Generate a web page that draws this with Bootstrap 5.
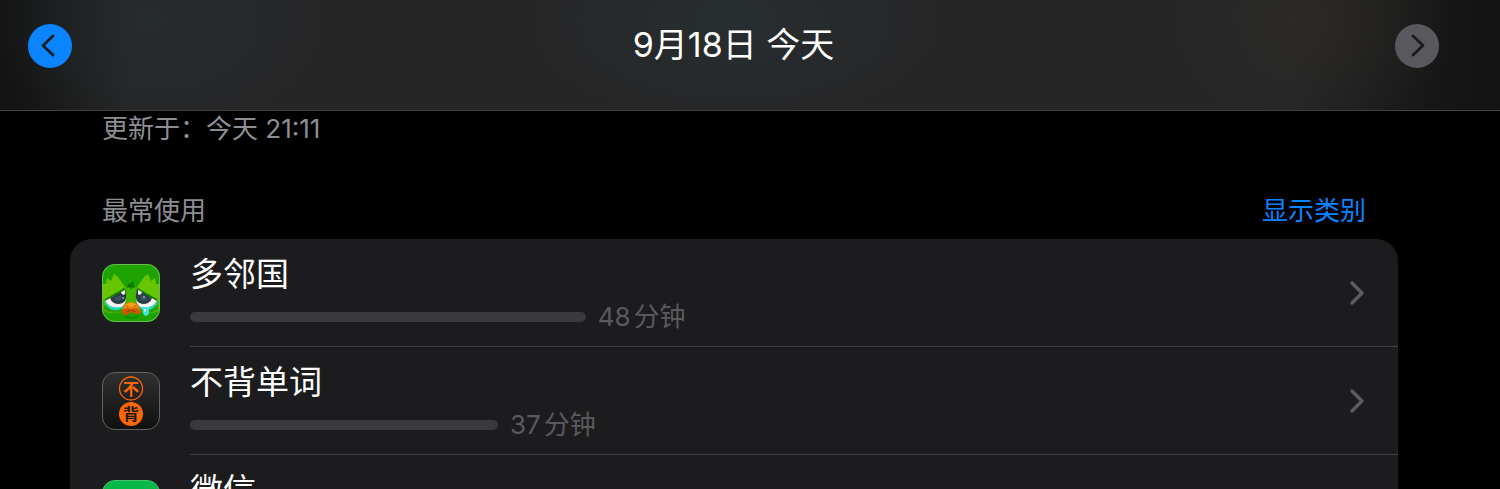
<!DOCTYPE html>
<html lang="zh-CN" data-bs-theme="dark">
<head>
<meta charset="utf-8">
<meta name="viewport" content="width=device-width, initial-scale=1">
<title>屏幕使用时间</title>
<link href="https://cdn.jsdelivr.net/npm/bootstrap@5.3.0/dist/css/bootstrap.min.css" rel="stylesheet">
<style>
body { background: #000; font-family: Inter, "Noto Sans CJK SC", sans-serif; font-size: 26px; line-height: 36px; }
.day-bar {
  padding: 24px 61px 42px 28px; border-bottom: 1px solid #414143;
  background:
    radial-gradient(ellipse 170px 110px at 150px 20px, rgba(38,48,54,.5), transparent),
    radial-gradient(ellipse 200px 100px at 49% 20px, rgba(42,54,57,.5), transparent),
    radial-gradient(ellipse 140px 110px at 88% 20px, rgba(50,47,40,.5), transparent),
    linear-gradient(90deg, #131313 0, #161616 30px, #262627 130px, #262627 calc(100% - 210px), #161616 calc(100% - 60px), #131313 100%);
}
.day-title { font-size: 34px; line-height: 42px; font-weight: 400; }
.day-btn { width: 44px; height: 44px; background: #0a84ff; }
.day-btn:disabled { background: #58585d; opacity: 1; }
.page-body { padding: 0 102px 0 70px; }
.muted-text { color: #8d8d93; }
.section-head { padding: 0 32px; margin-top: 46px; margin-bottom: 10px; }
.section-title { font-size: 26px; line-height: 36px; }
.section-head a { color: #0a84ff; }
.usage-list { background: #1c1c1e; border-radius: 22px 22px 0 0; }
.usage-row { padding-left: 32px; gap: 30px; color: #fff; height: 108px; }
.usage-main { border-bottom: 1px solid #3d3d40; padding-right: 33px; gap: 12px; }
.app-name { font-size: 33px; line-height: 42px; padding-top: 14px; }
.usage-bar { height: 10px; background: #3a3a3c; }
.usage-time { color: #59595e; }
.usage-unit { margin-left: 3px; }
</style>
</head>
<body class="vh-100 overflow-hidden">
<header class="day-bar d-flex align-items-start justify-content-between">
  <button type="button" class="day-btn btn border-0 rounded-circle p-0 d-flex" aria-label="前一天">
    <svg width="44" height="44" viewBox="0 0 44 44" fill="none" stroke="#1a1d20" stroke-width="2.8" stroke-linecap="round" stroke-linejoin="round"><path d="M25 12 15 21.500 25 31"/></svg>
  </button>
  <h1 class="day-title m-0 text-white">9月18日 今天</h1>
  <button type="button" class="day-btn btn border-0 rounded-circle p-0 d-flex" aria-label="后一天" disabled>
    <svg width="44" height="44" viewBox="0 0 44 44" fill="none" stroke="#1a1a1b" stroke-width="2.8" stroke-linecap="round" stroke-linejoin="round"><path d="M18 12 28 21.500 18 31"/></svg>
  </button>
</header>
<main class="page-body">
  <p class="muted-text m-0 px-4 ms-2">更新于：今天 21:11</p>
  <div class="section-head d-flex justify-content-between">
    <h2 class="section-title muted-text m-0 fw-normal" id="most-used">最常使用</h2>
    <a href="#most-used" class="text-decoration-none">显示类别</a>
  </div>
  <div class="usage-list overflow-hidden">
    <a href="#duolingo" id="duolingo" class="usage-row d-flex text-decoration-none">
      <svg class="flex-shrink-0 align-self-center" width="58" height="58" viewBox="0 0 58 58" aria-hidden="true">
        <defs><clipPath id="tile"><rect width="58" height="58" rx="13"/></clipPath></defs>
        <g clip-path="url(#tile)">
          <rect width="58" height="58" fill="#1fa300"/>
          <path d="M0 34Q10 30 22 24Q24 21 29 25Q34 21 36 24Q48 30 58 34V46Q50 52 38 48Q30 44 20 48Q8 52 0 46Z" fill="#43b600"/>
          <path d="M3 41Q12 50 22 44L21 47Q10 51 2 45ZM55 41Q46 50 36 44L37 47Q48 51 56 45Z" fill="#2d9f00"/>
          <path d="M0 20 4 20 5 14 9 17 12 10 16 13 23 23 4 35 0 38ZM58 20 54 20 53 14 49 17 46 10 42 13 35 23 54 35 58 38Z" fill="#69c500"/>
          <path d="M25 24 26 19 28 20 31 17 33 24 30 23 29 26 28 23Z" fill="#087d00"/>
          <path d="M2 37Q6 47 15 46Q21 45 23 41ZM56 37Q52 47 43 46Q37 45 35 41Z" fill="#20dac9"/>
          <path d="M3 36 23 26Q26 40 19 43Q7 45 3 36ZM55 36 35 26Q32 40 39 43Q51 45 55 36Z" fill="#fff0ed"/>
          <path d="M8 34 23 25Q27 39 17 40Q10 40 8 34ZM50 34 35 25Q31 39 41 40Q48 40 50 34Z" fill="#293d48"/>
          <path d="M12 34 19 31Q21 36 16 37Q13 37 12 34ZM46 34 39 31Q37 36 42 37Q45 37 46 34Z" fill="#3a515d"/>
          <path d="M3 36 23 25M55 36 35 25" stroke="#087d00" stroke-width="1.500"/>
          <path d="M19 28 23 26V30Q20 32 19 28ZM36 26 40 28Q39 32 36 30Z" fill="#fff"/>
          <circle cx="21" cy="34" r="1" fill="#92a9ae"/><circle cx="42" cy="33" r="1" fill="#92a9ae"/>
          <path d="M40 43Q44 44 49 42L47 45V49Q46 52 44 52Q41 51 41 48Z" fill="#3ee7df"/><path d="M43 45V48" stroke="#c5fff5" stroke-width="1.500"/>
          <path d="M22 50Q29 56 37 50L35 54Q29 56 24 54Z" fill="#138c00"/>
          <path d="M22 41Q29 35 36 41L39 47Q38 51 34 50L29 48 25 51Q20 52 20 47Z" fill="#cd5a00"/>
          <path d="M22 41Q29 35 36 41L38 46Q32 42 29 46Q26 42 20 46Z" fill="#e9870c"/><path d="M24 41Q29 36 34 41Q29 44 24 41Z" fill="#f9a01c"/>
          <path d="M25 42H26M32 42H33M25 48 29 46 34 48" fill="none" stroke="#a74500" stroke-width="1.200"/>
        </g>
        <rect x=".5" y=".5" width="57" height="57" rx="12.500" fill="none" stroke="#65bd52"/>
      </svg>
      <div class="usage-main d-flex align-items-center flex-grow-1">
        <div class="flex-grow-1 align-self-start">
          <div class="app-name">多邻国</div>
          <div class="d-flex align-items-center gap-2 pt-1"><div class="usage-bar rounded-pill" style="width:34.5%"></div><span class="usage-time ms-1">48<span class="usage-unit">分钟</span></span></div>
        </div>
        <svg class="flex-shrink-0" width="16" height="26" viewBox="0 0 16 26" fill="none" stroke="#5b5b60" stroke-width="3.5" stroke-linecap="round" stroke-linejoin="round"><path d="M3 3 13 13 3 23"/></svg>
      </div>
    </a>
    <a href="#bubei" id="bubei" class="usage-row d-flex text-decoration-none">
      <svg class="flex-shrink-0 align-self-center" width="58" height="58" viewBox="0 0 58 58" aria-hidden="true">
        <defs><linearGradient id="dusk" x1="0" y1="0" x2="0" y2="1"><stop stop-color="#303030"/><stop offset="1" stop-color="#101010"/></linearGradient></defs>
        <rect x=".5" y=".5" width="57" height="57" rx="12.500" fill="url(#dusk)" stroke="#626264"/>
        <circle cx="29" cy="16.500" r="11.500" fill="none" stroke="#f60" stroke-width="1.300"/>
        <circle cx="29" cy="42" r="12" fill="#f60"/>
        <text x="29" y="22.500" text-anchor="middle" font-size="16" font-weight="700" fill="#f60">不</text>
        <text x="29" y="48" text-anchor="middle" font-size="16" font-weight="700" fill="#1b1b1b">背</text>
      </svg>
      <div class="usage-main d-flex align-items-center flex-grow-1">
        <div class="flex-grow-1 align-self-start">
          <div class="app-name">不背单词</div>
          <div class="d-flex align-items-center gap-2 pt-1"><div class="usage-bar rounded-pill" style="width:26.85%"></div><span class="usage-time ms-1">37<span class="usage-unit">分钟</span></span></div>
        </div>
        <svg class="flex-shrink-0" width="16" height="26" viewBox="0 0 16 26" fill="none" stroke="#5b5b60" stroke-width="3.5" stroke-linecap="round" stroke-linejoin="round"><path d="M3 3 13 13 3 23"/></svg>
      </div>
    </a>
    <a href="#wechat" id="wechat" class="usage-row d-flex text-decoration-none">
      <svg class="flex-shrink-0 align-self-center" width="58" height="58" viewBox="0 0 58 58" aria-hidden="true">
        <rect x=".5" y=".5" width="57" height="57" rx="12.500" fill="#06b848" stroke="#43c66f"/>
        <ellipse cx="23" cy="25" rx="14" ry="12" fill="#fff"/><ellipse cx="37" cy="35" rx="12" ry="10" fill="#fff" stroke="#06b848"/>
      </svg>
      <div class="usage-main flex-grow-1"><div class="app-name">微信</div></div>
    </a>
  </div>
</main>
<script src="https://cdn.jsdelivr.net/npm/bootstrap@5.3.0/dist/js/bootstrap.bundle.min.js"></script>
</body>
</html>
